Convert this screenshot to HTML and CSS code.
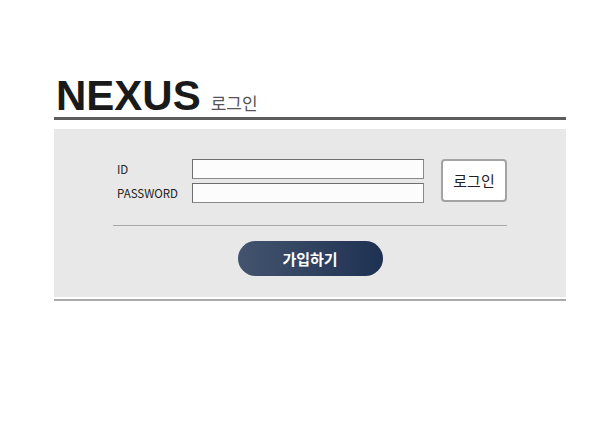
FILE: index.html
```html
<!DOCTYPE html>
<html lang="ko">
<head>
    <meta charset="UTF-8">
    <meta name="viewport" content="width=device-width, initial-scale=1.0">
    <title>NEXUS 로그인</title>
    <link rel="stylesheet" href="styles.css">
</head>
<body>
    <div class="wrap">
        <!-- Title -->
        <header class="title">
            <h1>NEXUS</h1>
            <span class="sub">로그인</span>
        </header>

        <!-- Login box -->
        <div class="login-box">
            <form class="login-form" onsubmit="return false">
                <div class="fields">
                    <label for="user-id">ID</label>
                    <input type="text" id="user-id">
                    <label for="user-pw">PASSWORD</label>
                    <input type="password" id="user-pw">
                </div>
                <button type="submit" class="login-button">로그인</button>
            </form>
            <hr class="divider">
            <div class="join">
                <button type="button" class="join-button">가입하기</button>
            </div>
        </div>
        <div class="bottom-line"></div>
    </div>
</body>
</html>
```

FILE: styles.css
```css
/* Reset */
* {
    margin: 0;
    padding: 0;
    box-sizing: border-box;
}

body {
    font-family: 'Noto Sans CJK KR', 'Liberation Sans', sans-serif;
    background-color: #fff;
    color: #222;
}

.wrap {
    width: 512px;
    margin-left: 54px;
}

.title {
    display: flex;
    align-items: baseline;
    gap: 10px;
    margin-top: 76px;
    height: 44px;
    padding-bottom: 1px;
    border-bottom: 3px solid #5c5c5c;
    line-height: 40px;
}

.title h1 {
    font-family: 'Liberation Sans', Arial, sans-serif;
    font-size: 42px;
    font-weight: bold;
    color: #1a1a1a;
    padding-left: 2px;
}

.title .sub {
    font-size: 17px;
    line-height: 17px;
    color: #555;
    margin-bottom: 2px;
}

.login-box {
    margin-top: 9px;
    height: 168px;
    background-color: #e8e8e8;
    padding-top: 30px;
}

.login-form {
    display: flex;
    align-items: flex-start;
    padding-left: 63px;
}

.fields {
    display: grid;
    grid-template-columns: 75px 232px;
    row-gap: 4px;
    align-items: center;
}

.fields label {
    font-size: 11.5px;
    color: #222;
}

.fields input {
    height: 20px;
    border: 1px solid #8a8a8a;
    border-top-color: #6e6e6e;
    border-left-color: #6e6e6e;
    background: #fcfcfc;
}

.login-button {
    margin-left: 17px;
    width: 66px;
    height: 43px;
    border: 2px solid #a3a3a3;
    border-radius: 4px;
    background: #fff;
    font-family: 'Noto Sans CJK KR', sans-serif;
    font-size: 15px;
    color: #222;
    cursor: pointer;
}

.divider {
    margin: 22px 59px 0;
    border: none;
    border-top: 1px solid #a8a8a8;
}

.join {
    display: flex;
    justify-content: center;
    margin-top: 15px;
}

.join-button {
    width: 145px;
    height: 35px;
    border: none;
    border-radius: 18px;
    background: linear-gradient(to right, #44546f, #1f3152);
    color: #fff;
    font-family: 'Noto Sans CJK KR', sans-serif;
    font-size: 15px;
    font-weight: bold;
    cursor: pointer;
}

.bottom-line {
    margin-top: 2px;
    height: 2px;
    background-color: #aaa;
}
```
